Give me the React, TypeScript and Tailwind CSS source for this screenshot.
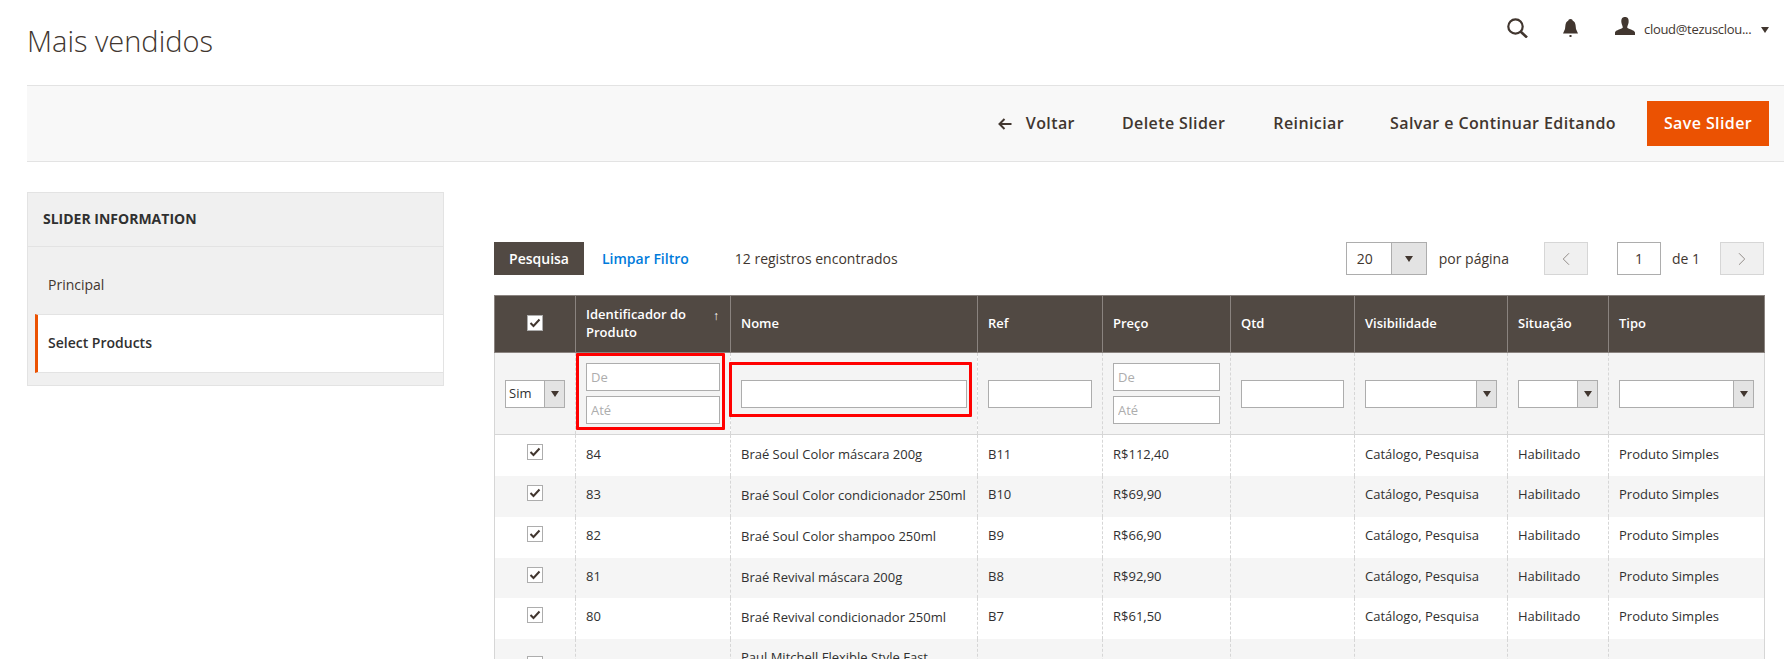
import { ChevronLeft, ChevronRight } from "lucide-react";

const rows = [
  { id: "84", name: "Braé Soul Color máscara 200g", ref: "B11", price: "R$112,40", h: "h-[41px]" },
  { id: "83", name: "Braé Soul Color condicionador 250ml", ref: "B10", price: "R$69,90", h: "h-[41px]" },
  { id: "82", name: "Braé Soul Color shampoo 250ml", ref: "B9", price: "R$66,90", h: "h-[41px]" },
  { id: "81", name: "Braé Revival máscara 200g", ref: "B8", price: "R$92,90", h: "h-[40px]" },
  { id: "80", name: "Braé Revival condicionador 250ml", ref: "B7", price: "R$61,50", h: "h-[41px]" },
  { id: "79", name: "Paul Mitchell Flexible Style Fast Drying Sculpting Spray 250ml", ref: "B6", price: "R$89,90", h: "h-[57px]" },
];

function Check({ className }: { className: string }) {
  return (
    <span className={`flex h-4 w-4 items-center justify-center border border-[#adadad] bg-white ${className}`}>
      <svg width="12" height="10" viewBox="0 0 12 10">
        <path d="M1.5 5 L4.5 8 L10.5 1.5" fill="none" stroke="#41362f" strokeWidth="2" />
      </svg>
    </span>
  );
}

function Arrow() {
  return <span className="h-0 w-0 border-x-[4px] border-t-[6px] border-x-transparent border-t-[#41362f]" />;
}

function FilterSelect({ value }: { value?: string }) {
  return (
    <div className="flex h-7 w-full border border-[#adadad] bg-white">
      <span className="flex-1 pl-[3px] leading-[25px] text-[#303030]">{value}</span>
      <span className="flex w-5 items-center justify-center border-l border-[#adadad] bg-[#e3e3e3]">
        <Arrow />
      </span>
    </div>
  );
}

function FilterInput({ placeholder }: { placeholder?: string }) {
  return (
    <input
      readOnly
      placeholder={placeholder}
      className="block h-7 w-full border border-[#adadad] bg-white px-1 text-[13px] outline-none placeholder:text-[#adadad]"
    />
  );
}

function Range() {
  return (
    <div className="flex flex-col gap-[5px]">
      <FilterInput placeholder="De" />
      <FilterInput placeholder="Até" />
    </div>
  );
}

const th = "border border-[#8a837f] px-[10px] pb-[2px] text-left align-middle text-[13px] leading-[18px] font-semibold text-white";
const cell = "border-x border-dashed border-x-[#d6d6d6] px-[10px] align-middle";

export default function App() {
  return (
    <div className="h-[659px] w-full overflow-hidden bg-white font-['Open_Sans',sans-serif] text-[#41362f]">
      {/* Top bar */}
      <header className="flex h-[85px] justify-between pt-[20px] pr-[15px] pl-[27px]">
        <h1 className="mt-px text-[29px] leading-[40px] font-light">Mais vendidos</h1>
        <div className="flex h-[30px] items-start">
          <svg width="21" height="20" viewBox="0 0 21 20" className="mt-[-2px]">
            <circle cx="8.5" cy="8.5" r="7.2" fill="none" stroke="#41362f" strokeWidth="2.2" />
            <path d="M13.5 13.5 L20 19.5" stroke="#41362f" strokeWidth="2.6" />
          </svg>
          <svg width="15" height="18" viewBox="0 0 15 18" className="mt-[-1px] ml-[35px]">
            <path d="M7.5 0 C9 0 9.6 1 9.8 1.8 C11.6 2.6 12.4 4.4 12.6 6.5 L13 10 L15 14.5 H0 L2 10 L2.4 6.5 C2.6 4.4 3.4 2.6 5.2 1.8 C5.4 1 6 0 7.5 0 Z" fill="#41362f" />
            <rect x="6.5" y="16" width="2" height="2" fill="#41362f" />
          </svg>
          <svg width="20" height="18" viewBox="0 0 20 18" className="mt-[-3px] ml-[37px]">
            <path d="M10 0 C13 0 14 2.2 13.6 5.4 C13.3 7.6 12.2 9 12.2 10.4 C12.2 11.8 20 12.8 20 15.5 V18 H0 V15.5 C0 12.8 7.8 11.8 7.8 10.4 C7.8 9 6.7 7.6 6.4 5.4 C6 2.2 7 0 10 0 Z" fill="#41362f" />
          </svg>
          <span className="ml-[9px] w-[107px] text-[13px] leading-[18px] tracking-[-0.3px] whitespace-nowrap">cloud@tezusclou...</span>
          <span className="mt-[7px] ml-[10px] h-0 w-0 border-x-[4px] border-t-[6px] border-x-transparent border-t-[#41362f]" />
        </div>
      </header>

      {/* Actions */}
      <div className="ml-[27px] flex h-[77px] items-center justify-end border-y border-[#e3e3e3] bg-[#f8f8f8] pr-[15px] text-[16px] font-semibold tracking-[0.4px]">
        <svg width="14" height="12" viewBox="0 0 14 12" className="mr-[14px]">
          <path d="M13.5 6 H2 M6.5 1 L1.5 6 L6.5 11" fill="none" stroke="#41362f" strokeWidth="2" />
        </svg>
        <span className="pb-[2px]">Voltar</span>
        <span className="ml-[47px] pb-[2px]">Delete Slider</span>
        <span className="ml-[48px] pb-[2px]">Reiniciar</span>
        <span className="ml-[46px] pb-[2px]">Salvar e Continuar Editando</span>
        <button className="ml-[31px] h-[45px] w-[122px] bg-[#eb5202] pb-[2px] text-white">Save Slider</button>
      </div>

      <div className="flex items-start gap-[50px] pt-[30px] pl-[27px]">
        {/* Sidebar */}
        <aside className="h-[194px] w-[417px] shrink-0 border border-[#e3e3e3] bg-[#f0f0f0]">
          <div className="h-[54px] border-b border-[#e3e3e3] pl-[15px] text-sm leading-[52px] font-bold text-[#303030]">SLIDER INFORMATION</div>
          <div className="flex h-[67px] items-end pb-[19px] pl-[20px] text-sm">Principal</div>
          <div className="ml-[7px] flex h-[59px] items-center border-y border-[#e3e3e3] border-l-[3px] border-l-[#eb5202] bg-white pb-[2px] pl-[10px] text-sm font-semibold text-[#303030]">
            Select Products
          </div>
        </aside>

        {/* Grid */}
        <main className="mt-[50px] w-[1270px] shrink-0 text-[13px]">
          <div className="mb-[20px] flex h-[33px] items-center">
            <button className="h-[33px] w-[90px] bg-[#514943] text-[14px] font-semibold text-white">Pesquisa</button>
            <span className="ml-[18px] text-[14px] font-semibold text-[#007bdb]">Limpar Filtro</span>
            <span className="ml-[46px] text-[14px]">12 registros encontrados</span>
            <div className="ml-auto flex h-[33px] w-[81px] border border-[#adadad] bg-white">
              <span className="flex-1 pl-[10px] text-[14px] leading-[31px]">20</span>
              <span className="flex w-[35px] items-center justify-center border-l border-[#adadad] bg-[#e3e3e3]">
                <Arrow />
              </span>
            </div>
            <span className="ml-[12px] text-[14px]">por página</span>
            <span className="ml-[35px] flex h-[33px] w-[44px] items-center justify-center border border-[#d6d6d6] bg-[#f0f0f0]">
              <ChevronLeft size={22} strokeWidth={1} className="text-[#8a837f]" />
            </span>
            <span className="ml-[29px] flex h-[33px] w-[44px] items-center justify-center border border-[#adadad] bg-white text-[14px]">1</span>
            <span className="ml-[11px] text-[14px]">de 1</span>
            <span className="ml-[20px] flex h-[33px] w-[44px] items-center justify-center border border-[#d6d6d6] bg-[#f0f0f0]">
              <ChevronRight size={22} strokeWidth={1} className="text-[#8a837f]" />
            </span>
          </div>

          <table className="w-full table-fixed border-collapse border-x border-[#d6d6d6] text-[#303030]">
            <colgroup>
              <col className="w-[81px]" />
              <col className="w-[155px]" />
              <col className="w-[247px]" />
              <col className="w-[125px]" />
              <col className="w-[128px]" />
              <col className="w-[124px]" />
              <col className="w-[153px]" />
              <col className="w-[101px]" />
              <col className="w-[156px]" />
            </colgroup>
            <thead>
              <tr className="h-[57px] bg-[#514943]">
                <th className={th}>
                  <Check className="mx-auto" />
                </th>
                <th className={th}>
                  <div className="relative pr-4">
                    Identificador do Produto
                    <span className="absolute top-[5px] right-[1px] text-[12px] leading-[12px] font-normal">↑</span>
                  </div>
                </th>
                <th className={th}>Nome</th>
                <th className={th}>Ref</th>
                <th className={th}>Preço</th>
                <th className={th}>Qtd</th>
                <th className={th}>Visibilidade</th>
                <th className={th}>Situação</th>
                <th className={th}>Tipo</th>
              </tr>
            </thead>
            <tbody>
              <tr className="h-[82px] border-b border-[#d6d6d6] bg-[#f4f4f4]">
                <td className={cell}>
                  <FilterSelect value="Sim" />
                </td>
                <td className={`${cell} relative`}>
                  <Range />
                  <div className="absolute top-0 right-[5px] bottom-[4px] left-0 rounded-[1px] border-[3px] border-[#ff0000]" />
                </td>
                <td className={`${cell} relative`}>
                  <FilterInput />
                  <div className="absolute top-[9px] right-[5px] bottom-[17px] left-[-2px] rounded-[1px] border-[3px] border-[#ff0000]" />
                </td>
                <td className={cell}>
                  <FilterInput />
                </td>
                <td className={cell}>
                  <Range />
                </td>
                <td className={cell}>
                  <FilterInput />
                </td>
                <td className={cell}>
                  <FilterSelect />
                </td>
                <td className={cell}>
                  <FilterSelect />
                </td>
                <td className={cell}>
                  <FilterSelect />
                </td>
              </tr>
              {rows.map((row, i) => (
                <tr key={row.id} className={i % 2 === 1 ? "bg-[#f5f5f5]" : "bg-white"}>
                  <td className={`${cell} ${row.h} pb-[2px]`}>
                    <Check className="mx-auto -translate-y-0.5" />
                  </td>
                  <td className={`${cell} pb-[2px]`}>{row.id}</td>
                  <td className={`${cell} pb-[2px] leading-[18px]`}>{row.name}</td>
                  <td className={`${cell} pb-[2px]`}>{row.ref}</td>
                  <td className={`${cell} pb-[2px]`}>{row.price}</td>
                  <td className={cell} />
                  <td className={`${cell} pb-[2px]`}>Catálogo, Pesquisa</td>
                  <td className={`${cell} pb-[2px]`}>Habilitado</td>
                  <td className={`${cell} pb-[2px]`}>Produto Simples</td>
                </tr>
              ))}
            </tbody>
          </table>
        </main>
      </div>
    </div>
  );
}
